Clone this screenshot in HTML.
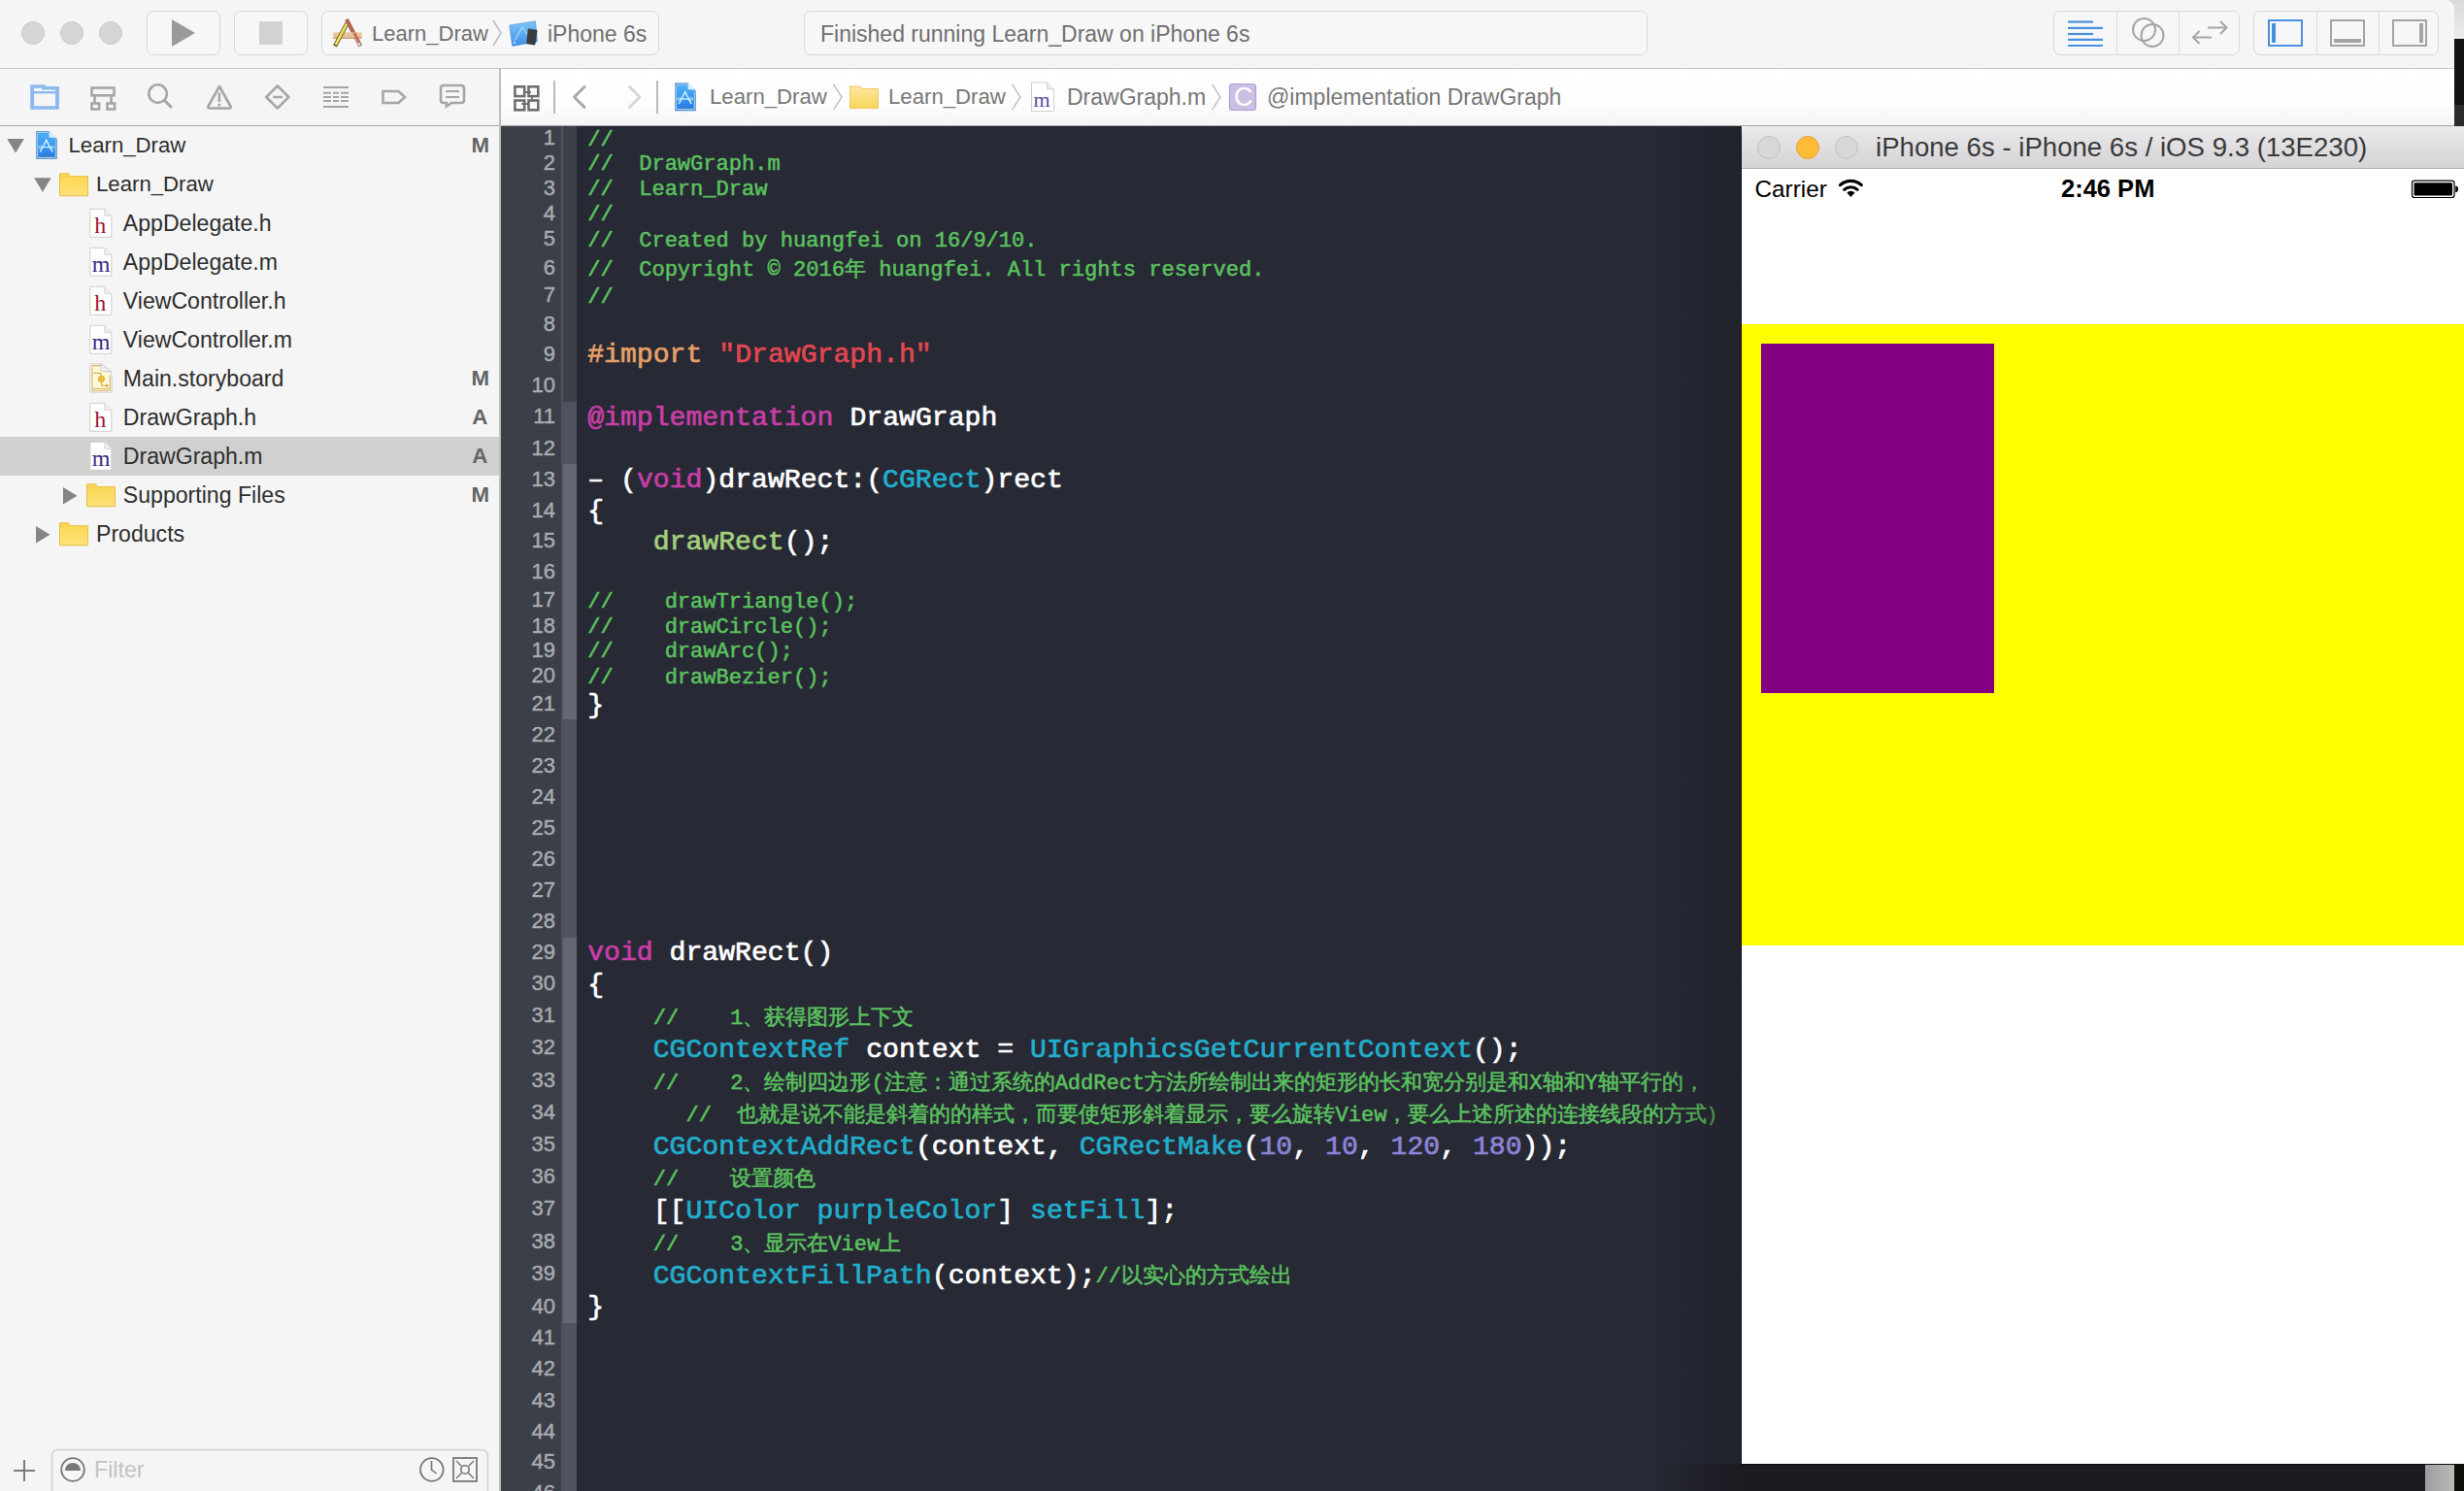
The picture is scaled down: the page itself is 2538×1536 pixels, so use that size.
<!DOCTYPE html>
<html><head><meta charset="utf-8"><style>
html,body{margin:0;padding:0;}
body{width:2538px;height:1536px;position:relative;overflow:hidden;background:#111;font-family:'Liberation Sans',sans-serif;}
.t{position:absolute;line-height:0;white-space:pre;}
svg{position:absolute;overflow:visible;}
.cj{display:inline-block;text-align:center;}
</style></head><body>

<div style="position:absolute;left:2500px;top:0px;width:38px;height:40px;background:linear-gradient(#d9d9d9,#ececec);"></div>
<div style="position:absolute;left:2528px;top:40px;width:10px;height:68px;background:#121212;"></div>
<div style="position:absolute;left:2528px;top:108px;width:10px;height:22px;background:#2b2b2b;"></div>
<div style="position:absolute;left:0;top:0;width:2528px;height:1536px;background:#f5f5f5;border-top-right-radius:9px;overflow:hidden">
<div style="position:absolute;left:0px;top:0px;width:2528px;height:70px;background:#f5f5f5;"></div>
<div style="position:absolute;left:0px;top:70px;width:2528px;height:1px;background:#c6c6c6;"></div>
<div style="position:absolute;left:0px;top:71px;width:514px;height:1465px;background:#f5f5f5;"></div>
<div style="position:absolute;left:516px;top:71px;width:2012px;height:58px;background:linear-gradient(#ffffff 0%,#fdfdfd 60%,#f5f5f5 100%);"></div>
<div style="position:absolute;left:0px;top:128.5px;width:2528px;height:1.5px;background:#a9a9a9;"></div>
<div style="position:absolute;left:514px;top:71px;width:2px;height:1465px;background:#bdbdbd;"></div>
</div>
<div style="position:absolute;left:22px;top:21.5px;width:22px;height:22px;border-radius:50%;background:#d6d6d6;border:1px solid #c9c9c9"></div>
<div style="position:absolute;left:62px;top:21.5px;width:22px;height:22px;border-radius:50%;background:#d6d6d6;border:1px solid #c9c9c9"></div>
<div style="position:absolute;left:101.5px;top:21.5px;width:22px;height:22px;border-radius:50%;background:#d6d6d6;border:1px solid #c9c9c9"></div>
<div style="position:absolute;left:151px;top:11px;width:76px;height:46px;border:1.5px solid #d9d9d9;border-radius:7px;background:#f7f7f7;box-sizing:border-box"></div>
<div style="position:absolute;left:241px;top:11px;width:76px;height:46px;border:1.5px solid #d9d9d9;border-radius:7px;background:#f7f7f7;box-sizing:border-box"></div>
<svg style="left:0;top:0" width="2538" height="70"><polygon points="177,20 177,48 201,34" fill="#9a9a9a"/><rect x="267" y="22" width="24" height="24" fill="#d2d2d2"/></svg>
<div style="position:absolute;left:331px;top:11px;width:348px;height:46px;border:1.5px solid #d9d9d9;border-radius:7px;background:#f7f7f7;box-sizing:border-box"></div>
<div style="position:absolute;left:828px;top:11px;width:869px;height:46px;border:1.5px solid #d9d9d9;border-radius:7px;background:#f7f7f7;box-sizing:border-box"></div>
<div class="t" style="left:383.0px;top:35.3px;font-family:'Liberation Sans', sans-serif;font-size:22px;color:#6f6f6f;font-weight:normal;">Learn_Draw</div>
<div class="t" style="left:564.0px;top:35.0px;font-family:'Liberation Sans', sans-serif;font-size:23px;color:#6f6f6f;font-weight:normal;">iPhone 6s</div>
<div class="t" style="left:845.0px;top:35.0px;font-family:'Liberation Sans', sans-serif;font-size:23px;color:#6f6f6f;font-weight:normal;">Finished running Learn_Draw on iPhone 6s</div>
<svg style="left:0;top:0" width="700" height="70"><polyline points="508,21 516,34 508,47" fill="none" stroke="#bdbdbd" stroke-width="1.6"/></svg>
<div style="position:absolute;left:2115px;top:11px;width:192px;height:46px;border:1.5px solid #d9d9d9;border-radius:7px;background:#f7f7f7;box-sizing:border-box"></div>
<div style="position:absolute;left:2180px;top:12px;width:1px;height:44px;background:#dcdcdc;"></div>
<div style="position:absolute;left:2244px;top:12px;width:1px;height:44px;background:#dcdcdc;"></div>
<div style="position:absolute;left:2321px;top:11px;width:191px;height:46px;border:1.5px solid #d9d9d9;border-radius:7px;background:#f7f7f7;box-sizing:border-box"></div>
<div style="position:absolute;left:2386px;top:12px;width:1px;height:44px;background:#dcdcdc;"></div>
<div style="position:absolute;left:2450px;top:12px;width:1px;height:44px;background:#dcdcdc;"></div>
<svg style="left:0;top:0" width="2538" height="70">
<g stroke="#4a90e2" stroke-width="2.2">
<line x1="2130" y1="22.5" x2="2156" y2="22.5"/><line x1="2130" y1="28.8" x2="2166" y2="28.8"/>
<line x1="2130" y1="35" x2="2156" y2="35"/><line x1="2130" y1="40.8" x2="2166" y2="40.8"/><line x1="2130" y1="47" x2="2166" y2="47"/>
</g>
<g fill="none" stroke="#a4a4a4" stroke-width="2">
<circle cx="2208.5" cy="30.5" r="11.5"/><circle cx="2217" cy="36.5" r="11.5"/>
<polyline points="2274,28.5 2293.5,28.5"/><polyline points="2287,22 2293.5,28.5 2287,35"/>
<polyline points="2259,38.5 2278,38.5"/><polyline points="2265.5,32 2259,38.5 2265.5,45"/>
</g>
<rect x="2337" y="21" width="34" height="26" fill="none" stroke="#4a90e2" stroke-width="2"/>
<rect x="2340" y="24" width="4" height="20" fill="#4a90e2"/>
<rect x="2401" y="21" width="34" height="26" fill="none" stroke="#a4a4a4" stroke-width="2"/>
<rect x="2404" y="40" width="28" height="4" fill="#a4a4a4"/>
<rect x="2465" y="21" width="34" height="26" fill="none" stroke="#a4a4a4" stroke-width="2"/>
<rect x="2492" y="24" width="4" height="20" fill="#a4a4a4"/>
</svg>
<svg style="left:0;top:71px" width="516" height="58" viewBox="0 71 516 58">
<path d="M31.2,112.8 V87.2 H46.8 V89 H60.9 V112.8 Z" fill="#8cbaf0"/>
<rect x="35.1" y="96.4" width="21.9" height="12.8" fill="#f5f5f5"/>
<path d="M35.1,90.8 H43 V92.4 H57 V94 H35.1 Z" fill="#f5f5f5"/>
<g fill="none" stroke="#a6a6a6" stroke-width="2.6">
<rect x="94.5" y="90.5" width="23" height="7.8"/>
<line x1="97.5" y1="98.4" x2="97.5" y2="106"/><line x1="114.5" y1="98.4" x2="114.5" y2="106"/>
<rect x="94.5" y="106.5" width="7.6" height="6"/><rect x="110.5" y="106.5" width="7.6" height="6"/>
<circle cx="162.6" cy="96.6" r="9.3"/>
<line x1="169.5" y1="103.5" x2="176" y2="110" stroke-linecap="round" stroke-width="3"/>
<path d="M226,89 L214.5,109.5 Q213.5,111.5 216,111.5 L236,111.5 Q238.5,111.5 237.5,109.5 Z" stroke-linejoin="round"/>
<line x1="225.9" y1="95.5" x2="225.9" y2="105" />
<path d="M285.8,88.5 L297.4,100 L285.8,111.5 L274.2,100 Z" stroke-linejoin="round"/>
<line x1="281.2" y1="100" x2="291" y2="100"/>
<line x1="333" y1="90" x2="359" y2="90" stroke-width="2"/>
<line x1="333" y1="110" x2="359" y2="110" stroke-width="2"/>
<g stroke-width="2" stroke-dasharray="8 2 6 2 8">
<line x1="333" y1="95.8" x2="359" y2="95.8"/><line x1="333" y1="99.9" x2="359" y2="99.9"/><line x1="333" y1="103.9" x2="359" y2="103.9"/>
</g>
<path d="M394.5,94 H410.5 L417,100 L410.5,106 H394.5 Z"/>
<path d="M457,88 H475 Q478,88 478,91 V103 Q478,106 475,106 H465 L459.8,109.5 V106 H457 Q454,106 454,103 V91 Q454,88 457,88 Z"/>
<line x1="459" y1="94" x2="473" y2="94" stroke-width="2"/><line x1="459" y1="100" x2="473" y2="100" stroke-width="2"/>
</g>
<rect x="224.5" y="106.8" width="2.8" height="2.6" fill="#a6a6a6"/>
</svg>
<svg style="left:516px;top:71px" width="2012" height="58" viewBox="516 71 2012 58">
<g fill="none" stroke="#6e6e6e" stroke-width="2.6">
<rect x="530.4" y="89.3" width="9.8" height="9.8"/><rect x="544.5" y="89.3" width="9.8" height="9.8"/>
<rect x="530.4" y="103.5" width="9.8" height="9.8"/><rect x="544.5" y="103.5" width="9.8" height="9.8"/>
<line x1="540" y1="95" x2="547" y2="95" stroke-width="1.8"/><line x1="548" y1="99" x2="548" y2="105" stroke-width="1.8"/>
<line x1="537" y1="107" x2="544" y2="107" stroke-width="1.8"/>
</g>
<line x1="571" y1="83" x2="571" y2="117" stroke="#b3b3b3" stroke-width="1.8"/>
<line x1="677" y1="83" x2="677" y2="117" stroke="#b3b3b3" stroke-width="1.8"/>
<polyline points="602,89.5 591.5,100 602,110.5" fill="none" stroke="#a8a8a8" stroke-width="3" stroke-linecap="round" stroke-linejoin="round"/>
<polyline points="648.5,89.5 659,100 648.5,110.5" fill="none" stroke="#d6d6d6" stroke-width="3" stroke-linecap="round" stroke-linejoin="round"/>
<g fill="none" stroke="#c2c2c2" stroke-width="1.5">
<polyline points="858.5,87 867,100 858.5,113"/><polyline points="1042.5,87 1051,100 1042.5,113"/><polyline points="1248.5,87 1257,100 1248.5,113"/>
</g>
</svg>
<svg style="left:330px;top:8px" width="240" height="52" viewBox="330 8 240 52">
<line x1="357" y1="20" x2="371.2" y2="47.5" stroke="#8a6a6a" stroke-width="4"/>
<line x1="357" y1="20" x2="366" y2="38" stroke="#c5624f" stroke-width="3"/>
<line x1="366.5" y1="39" x2="370.6" y2="47" stroke="#e6dede" stroke-width="2.4"/>
<rect x="343.2" y="33.4" width="29.5" height="6" fill="#e8c69c"/>
<line x1="343.2" y1="39.2" x2="372.7" y2="39.2" stroke="#b98a5a" stroke-width="1"/>
<line x1="365" y1="34" x2="370" y2="44" stroke="#c5624f" stroke-width="3" opacity="0.85"/>
<line x1="357.5" y1="24" x2="345" y2="47.5" stroke="#6f6224" stroke-width="4.4"/>
<line x1="357.2" y1="24.5" x2="345.8" y2="46" stroke="#f1e45c" stroke-width="2.6"/>
<defs><linearGradient id="gbp" x1="0" y1="0" x2="0" y2="1"><stop offset="0" stop-color="#7cc4f8"/><stop offset="1" stop-color="#3f8fe8"/></linearGradient></defs>
<path d="M524.7,26 L551.5,21.7 L553.5,43 L527.7,47.5 Z" fill="url(#gbp)" stroke="#4a90d8" stroke-width="0.6"/>
<path d="M530,42 L538,28 L545,38" fill="none" stroke="#d2ebff" stroke-width="0.9"/>
<circle cx="530" cy="44" r="1" fill="#e8f4ff"/>
<path d="M544.4,29.4 L552.6,30.8 Q553.6,31 553.4,32 L551.4,45.6 Q551.2,46.6 550.2,46.4 L543,45.2 Q542,45 542.2,44 L543.8,30.2 Q544,29.3 544.4,29.4 Z" fill="#3c3c3c"/>
</svg>
<svg style="left:690px;top:80px" width="620" height="40" viewBox="690 80 620 40">
<defs>
<linearGradient id="gblue3" x1="0" y1="0" x2="0" y2="1"><stop offset="0" stop-color="#4eb0f5"/><stop offset="1" stop-color="#2a80ea"/></linearGradient>
<linearGradient id="gyel" x1="0" y1="0" x2="0" y2="1"><stop offset="0" stop-color="#fde8a0"/><stop offset="1" stop-color="#f9d45a"/></linearGradient>
</defs>
<g transform="translate(658,-49.6)"><path d="M37.3,135.2 H50.6 L58.7,143.3 V163.8 H37.3 Z" fill="#3b7cc6"/>
<path d="M38.8,136.7 H50 L57.2,143.9 V162.3 H38.8 Z" fill="none" stroke="#b4ecff" stroke-width="1"/>
<path d="M39.6,137.5 H49.6 L56.4,144.3 V159.8 H39.6 Z" fill="url(#gblue2)"/>
<line x1="39.3" y1="161" x2="56.7" y2="161" stroke="#3b7cc6" stroke-width="1.1"/>
<path d="M50.6,135.4 V141.8 H58.5 Z" fill="#d6f3ff"/>
<path d="M41.3,156.6 L47.7,144.3 L54.1,156.6" stroke="#c8f2ff" stroke-width="1.5" fill="none"/>
<line x1="42.5" y1="151.6" x2="53" y2="151.6" stroke="#c8f2ff" stroke-width="1.3"/>
<circle cx="41.5" cy="151.6" r="1.4" fill="none" stroke="#c8f2ff" stroke-width="0.9"/>
<circle cx="54.3" cy="151.6" r="1.4" fill="none" stroke="#c8f2ff" stroke-width="0.9"/></g>
<path d="M875.5,111.5 V89 H886 L888,91.5 H904.5 V111.5 Z" fill="url(#gyel)" stroke="#e8c04a" stroke-width="0.8"/>
<path d="M1062.5,85 H1078.5 L1085.5,92 V114.5 H1062.5 Z" fill="#ffffff" stroke="#cfcfcf" stroke-width="1"/>
<path d="M1078.5,85 V92 H1085.5" fill="#ececec" stroke="#cfcfcf" stroke-width="1"/>
<rect x="1266.5" y="86.5" width="27" height="27" rx="3" fill="#cbc0e3" stroke="#ad9fd6" stroke-width="1.2"/>
</svg>
<div class="t" style="left:1064.5px;top:103.3px;font-family:'Liberation Serif', serif;font-size:22px;color:#5b4ca6;font-weight:normal;">m</div>
<div class="t" style="left:1271.0px;top:100.0px;font-family:'Liberation Sans', sans-serif;font-size:27px;color:#ffffff;font-weight:normal;">C</div>
<div class="t" style="left:731.0px;top:100.2px;font-family:'Liberation Sans', sans-serif;font-size:22.2px;color:#777777;font-weight:normal;">Learn_Draw</div>
<div class="t" style="left:915.0px;top:100.2px;font-family:'Liberation Sans', sans-serif;font-size:22.2px;color:#777777;font-weight:normal;">Learn_Draw</div>
<div class="t" style="left:1099.0px;top:100.0px;font-family:'Liberation Sans', sans-serif;font-size:23px;color:#777777;font-weight:normal;">DrawGraph.m</div>
<div class="t" style="left:1305.0px;top:100.0px;font-family:'Liberation Sans', sans-serif;font-size:23px;color:#777777;font-weight:normal;">@implementation DrawGraph</div>
<div style="position:absolute;left:0px;top:450px;width:514px;height:40px;background:#d0d0d0;"></div>
<svg style="left:0;top:0" width="1" height="1"><defs><linearGradient id="gyel2" x1="0" y1="0" x2="0" y2="1"><stop offset="0" stop-color="#fcd64f"/><stop offset="1" stop-color="#fde27a"/></linearGradient>
<linearGradient id="gblue2" x1="0" y1="0" x2="0" y2="1"><stop offset="0" stop-color="#4eb0f5"/><stop offset="1" stop-color="#2a80ea"/></linearGradient></defs></svg>
<svg style="left:0;top:0" width="1" height="1"><polygon points="7.3,143 24.8,143 16.05,157.5" fill="#858585"/></svg>
<svg style="left:0;top:0" width="1" height="1"><path d="M37.3,135.2 H50.6 L58.7,143.3 V163.8 H37.3 Z" fill="#3b7cc6"/>
<path d="M38.8,136.7 H50 L57.2,143.9 V162.3 H38.8 Z" fill="none" stroke="#b4ecff" stroke-width="1"/>
<path d="M39.6,137.5 H49.6 L56.4,144.3 V159.8 H39.6 Z" fill="url(#gblue2)"/>
<line x1="39.3" y1="161" x2="56.7" y2="161" stroke="#3b7cc6" stroke-width="1.1"/>
<path d="M50.6,135.4 V141.8 H58.5 Z" fill="#d6f3ff"/>
<path d="M41.3,156.6 L47.7,144.3 L54.1,156.6" stroke="#c8f2ff" stroke-width="1.5" fill="none"/>
<line x1="42.5" y1="151.6" x2="53" y2="151.6" stroke="#c8f2ff" stroke-width="1.3"/>
<circle cx="41.5" cy="151.6" r="1.4" fill="none" stroke="#c8f2ff" stroke-width="0.9"/>
<circle cx="54.3" cy="151.6" r="1.4" fill="none" stroke="#c8f2ff" stroke-width="0.9"/></svg>
<div class="t" style="left:70.5px;top:149.8px;font-family:'Liberation Sans', sans-serif;font-size:22.2px;color:#2e2e2e;font-weight:normal;">Learn_Draw</div>
<div class="t" style="left:485.5px;top:150.2px;font-family:'Liberation Sans', sans-serif;font-size:22.3px;color:#646464;font-weight:bold;">M</div>
<svg style="left:0;top:0" width="1" height="1"><polygon points="35.2,183.3 52.7,183.3 43.95,197.8" fill="#858585"/></svg>
<svg style="left:0;top:0" width="1" height="1"><path d="M61.5,201.8 V178.8 H70.5 L72.5,181.5 H90.5 V201.8 Z" fill="url(#gyel2)" stroke="#e3b93c" stroke-width="0.9"/><line x1="62" y1="181.9" x2="90" y2="181.9" stroke="#f0cc55" stroke-width="0.8"/></svg>
<div class="t" style="left:99.0px;top:189.8px;font-family:'Liberation Sans', sans-serif;font-size:22.2px;color:#2e2e2e;font-weight:normal;">Learn_Draw</div>
<svg style="left:0;top:0" width="1" height="1"><path d="M92.8,215.3 H107.8 L114.8,222.3 V244.3 H92.8 Z" fill="#ffffff" stroke="#cdcdcd" stroke-width="1"/><path d="M107.8,215.3 V222.3 H114.8" fill="#efefef" stroke="#d5d5d5" stroke-width="1"/></svg>
<div class="t" style="left:97.3px;top:231.9px;font-family:'Liberation Serif', serif;font-size:24px;color:#a0142c;font-weight:normal;">h</div>
<div class="t" style="left:126.8px;top:229.5px;font-family:'Liberation Sans', sans-serif;font-size:23.1px;color:#2e2e2e;font-weight:normal;">AppDelegate.h</div>
<svg style="left:0;top:0" width="1" height="1"><path d="M92.8,255.3 H107.8 L114.8,262.3 V284.3 H92.8 Z" fill="#ffffff" stroke="#cdcdcd" stroke-width="1"/><path d="M107.8,255.3 V262.3 H114.8" fill="#efefef" stroke="#d5d5d5" stroke-width="1"/></svg>
<div class="t" style="left:94.8px;top:271.9px;font-family:'Liberation Serif', serif;font-size:24px;color:#3b2a84;font-weight:normal;">m</div>
<div class="t" style="left:126.8px;top:269.5px;font-family:'Liberation Sans', sans-serif;font-size:23.1px;color:#2e2e2e;font-weight:normal;">AppDelegate.m</div>
<svg style="left:0;top:0" width="1" height="1"><path d="M92.8,295.3 H107.8 L114.8,302.3 V324.3 H92.8 Z" fill="#ffffff" stroke="#cdcdcd" stroke-width="1"/><path d="M107.8,295.3 V302.3 H114.8" fill="#efefef" stroke="#d5d5d5" stroke-width="1"/></svg>
<div class="t" style="left:97.3px;top:311.9px;font-family:'Liberation Serif', serif;font-size:24px;color:#a0142c;font-weight:normal;">h</div>
<div class="t" style="left:126.8px;top:309.5px;font-family:'Liberation Sans', sans-serif;font-size:23.1px;color:#2e2e2e;font-weight:normal;">ViewController.h</div>
<svg style="left:0;top:0" width="1" height="1"><path d="M92.8,335.3 H107.8 L114.8,342.3 V364.3 H92.8 Z" fill="#ffffff" stroke="#cdcdcd" stroke-width="1"/><path d="M107.8,335.3 V342.3 H114.8" fill="#efefef" stroke="#d5d5d5" stroke-width="1"/></svg>
<div class="t" style="left:94.8px;top:351.9px;font-family:'Liberation Serif', serif;font-size:24px;color:#3b2a84;font-weight:normal;">m</div>
<div class="t" style="left:126.8px;top:349.5px;font-family:'Liberation Sans', sans-serif;font-size:23.1px;color:#2e2e2e;font-weight:normal;">ViewController.m</div>
<svg style="left:0;top:0" width="1" height="1"><path d="M92.8,374.8 H104 L115,385.5 V404 H92.8 Z" fill="#ffffff" stroke="#cacaca" stroke-width="1"/><path d="M104,374.8 V381.5 Q104,382.8 105.3,382.8 H115" fill="#eeeeee" stroke="#cacaca" stroke-width="1"/><path d="M94.9,376.6 H103.2 L113.3,386.5 V402.3 H94.9 Z" fill="#fffad6"/><path d="M103.2,376.6 H94.9 V402.3 H113.3 V386.5" fill="none" stroke="#d8b56c" stroke-width="1.1"/><path d="M104,374.8 V381.5 Q104,382.8 105.3,382.8 H115 Z" fill="#eeeeee" stroke="#cacaca" stroke-width="1"/><line x1="95" y1="400.3" x2="113" y2="400.3" stroke="#d8b56c" stroke-width="1"/><path d="M96.2,384.4 H101.6 Q104.4,384.4 104.4,387.2" fill="none" stroke="#d9aa44" stroke-width="1.1"/><circle cx="104.4" cy="390.4" r="3.2" fill="#f2be3c" stroke="#e0a635" stroke-width="0.8"/><path d="M104.4,393.6 V395.3 Q104.4,397.3 106.6,397.3 H110.5" fill="none" stroke="#d9aa44" stroke-width="1.1"/><polygon points="109.2,395.2 112.2,397.3 109.2,399.4" fill="#d9aa44"/></svg>
<div class="t" style="left:126.8px;top:389.5px;font-family:'Liberation Sans', sans-serif;font-size:23.1px;color:#2e2e2e;font-weight:normal;">Main.storyboard</div>
<div class="t" style="left:485.5px;top:390.2px;font-family:'Liberation Sans', sans-serif;font-size:22.3px;color:#646464;font-weight:bold;">M</div>
<svg style="left:0;top:0" width="1" height="1"><path d="M92.8,415.3 H107.8 L114.8,422.3 V444.3 H92.8 Z" fill="#ffffff" stroke="#cdcdcd" stroke-width="1"/><path d="M107.8,415.3 V422.3 H114.8" fill="#efefef" stroke="#d5d5d5" stroke-width="1"/></svg>
<div class="t" style="left:97.3px;top:431.9px;font-family:'Liberation Serif', serif;font-size:24px;color:#a0142c;font-weight:normal;">h</div>
<div class="t" style="left:126.8px;top:429.5px;font-family:'Liberation Sans', sans-serif;font-size:23.1px;color:#2e2e2e;font-weight:normal;">DrawGraph.h</div>
<div class="t" style="left:486.3px;top:430.2px;font-family:'Liberation Sans', sans-serif;font-size:22.3px;color:#646464;font-weight:bold;">A</div>
<svg style="left:0;top:0" width="1" height="1"><path d="M92.8,455.3 H107.8 L114.8,462.3 V484.3 H92.8 Z" fill="#ffffff" stroke="#cdcdcd" stroke-width="1"/><path d="M107.8,455.3 V462.3 H114.8" fill="#efefef" stroke="#d5d5d5" stroke-width="1"/></svg>
<div class="t" style="left:94.8px;top:471.9px;font-family:'Liberation Serif', serif;font-size:24px;color:#3b2a84;font-weight:normal;">m</div>
<div class="t" style="left:126.8px;top:469.5px;font-family:'Liberation Sans', sans-serif;font-size:23.1px;color:#2e2e2e;font-weight:normal;">DrawGraph.m</div>
<div class="t" style="left:486.3px;top:470.2px;font-family:'Liberation Sans', sans-serif;font-size:22.3px;color:#646464;font-weight:bold;">A</div>
<svg style="left:0;top:0" width="1" height="1"><polygon points="65,502 65,519.5 79.5,510.75" fill="#858585"/></svg>
<svg style="left:0;top:0" width="1" height="1"><path d="M89.5,521.8 V498.8 H98.5 L100.5,501.5 H118.5 V521.8 Z" fill="url(#gyel2)" stroke="#e3b93c" stroke-width="0.9"/><line x1="90" y1="501.90000000000003" x2="118" y2="501.90000000000003" stroke="#f0cc55" stroke-width="0.8"/></svg>
<div class="t" style="left:126.8px;top:509.5px;font-family:'Liberation Sans', sans-serif;font-size:23.1px;color:#2e2e2e;font-weight:normal;">Supporting Files</div>
<div class="t" style="left:485.5px;top:510.2px;font-family:'Liberation Sans', sans-serif;font-size:22.3px;color:#646464;font-weight:bold;">M</div>
<svg style="left:0;top:0" width="1" height="1"><polygon points="37,542 37,559.5 51.5,550.75" fill="#858585"/></svg>
<svg style="left:0;top:0" width="1" height="1"><path d="M61.5,561.8 V538.8 H70.5 L72.5,541.5 H90.5 V561.8 Z" fill="url(#gyel2)" stroke="#e3b93c" stroke-width="0.9"/><line x1="62" y1="541.9" x2="90" y2="541.9" stroke="#f0cc55" stroke-width="0.8"/></svg>
<div class="t" style="left:99.0px;top:549.5px;font-family:'Liberation Sans', sans-serif;font-size:23.1px;color:#2e2e2e;font-weight:normal;">Products</div>
<svg style="left:0;top:1480px" width="516" height="56" viewBox="0 1480 516 56">
<g stroke="#6f6f6f" stroke-width="1.8"><line x1="14" y1="1515" x2="36" y2="1515"/><line x1="25" y1="1504" x2="25" y2="1526"/></g>
<rect x="53.5" y="1493.5" width="449" height="50" rx="6" fill="#f5f5f5" stroke="#d2d2d2" stroke-width="1.5"/>
<circle cx="75" cy="1514" r="11.8" fill="none" stroke="#777" stroke-width="1.8"/>
<path d="M67,1515 A8,8 0 0 1 83,1515 Z" fill="#777"/>
<circle cx="444.8" cy="1514" r="11.8" fill="none" stroke="#777" stroke-width="1.8"/>
<polyline points="444.5,1505 444.5,1514 449.5,1518" fill="none" stroke="#777" stroke-width="1.6"/>
<rect x="467" y="1502" width="24" height="24" fill="none" stroke="#777" stroke-width="1.8"/>
<circle cx="479" cy="1514" r="4.2" fill="none" stroke="#777" stroke-width="1.6"/>
<g stroke="#777" stroke-width="1.4"><line x1="470" y1="1505" x2="475.5" y2="1510.5"/><line x1="488" y1="1505" x2="482.5" y2="1510.5"/><line x1="470" y1="1523" x2="475.5" y2="1517.5"/><line x1="488" y1="1523" x2="482.5" y2="1517.5"/></g>
</svg>
<div class="t" style="left:97.0px;top:1514.4px;font-family:'Liberation Sans', sans-serif;font-size:23.2px;color:#c3c3c3;font-weight:normal;">Filter</div>
<div style="position:absolute;left:516px;top:130px;width:62px;height:1406px;background:#3c3f48;"></div>
<div style="position:absolute;left:578px;top:130px;width:16px;height:1406px;background:#50535f;"></div>
<div style="position:absolute;left:578px;top:130px;width:16px;height:284px;background:#3d4049;"></div>
<div style="position:absolute;left:578px;top:130px;width:2px;height:284px;background:#50535d;"></div>
<div style="position:absolute;left:594px;top:130px;width:1200px;height:1406px;background:#272935;"></div>
<div style="position:absolute;left:580px;top:478px;width:14px;height:263px;background:#646875;"></div>
<div style="position:absolute;left:580px;top:965.5px;width:14px;height:397px;background:#646875;"></div>
<div class="t" style="left:522px;width:50px;text-align:right;top:142.3px;font-size:22px;color:#a9abb0;font-family:'Liberation Sans', sans-serif;-webkit-text-stroke:0.45px #a9abb0">1</div>
<div class="t" style="left:522px;width:50px;text-align:right;top:167.6px;font-size:22px;color:#a9abb0;font-family:'Liberation Sans', sans-serif;-webkit-text-stroke:0.45px #a9abb0">2</div>
<div class="t" style="left:522px;width:50px;text-align:right;top:193.8px;font-size:22px;color:#a9abb0;font-family:'Liberation Sans', sans-serif;-webkit-text-stroke:0.45px #a9abb0">3</div>
<div class="t" style="left:522px;width:50px;text-align:right;top:219.9px;font-size:22px;color:#a9abb0;font-family:'Liberation Sans', sans-serif;-webkit-text-stroke:0.45px #a9abb0">4</div>
<div class="t" style="left:522px;width:50px;text-align:right;top:246.1px;font-size:22px;color:#a9abb0;font-family:'Liberation Sans', sans-serif;-webkit-text-stroke:0.45px #a9abb0">5</div>
<div class="t" style="left:522px;width:50px;text-align:right;top:276.3px;font-size:22px;color:#a9abb0;font-family:'Liberation Sans', sans-serif;-webkit-text-stroke:0.45px #a9abb0">6</div>
<div class="t" style="left:522px;width:50px;text-align:right;top:304.0px;font-size:22px;color:#a9abb0;font-family:'Liberation Sans', sans-serif;-webkit-text-stroke:0.45px #a9abb0">7</div>
<div class="t" style="left:522px;width:50px;text-align:right;top:333.6px;font-size:22px;color:#a9abb0;font-family:'Liberation Sans', sans-serif;-webkit-text-stroke:0.45px #a9abb0">8</div>
<div class="t" style="left:522px;width:50px;text-align:right;top:364.8px;font-size:22px;color:#a9abb0;font-family:'Liberation Sans', sans-serif;-webkit-text-stroke:0.45px #a9abb0">9</div>
<div class="t" style="left:522px;width:50px;text-align:right;top:397.0px;font-size:22px;color:#a9abb0;font-family:'Liberation Sans', sans-serif;-webkit-text-stroke:0.45px #a9abb0">10</div>
<div class="t" style="left:522px;width:50px;text-align:right;top:429.3px;font-size:22px;color:#a9abb0;font-family:'Liberation Sans', sans-serif;-webkit-text-stroke:0.45px #a9abb0">11</div>
<div class="t" style="left:522px;width:50px;text-align:right;top:461.6px;font-size:22px;color:#a9abb0;font-family:'Liberation Sans', sans-serif;-webkit-text-stroke:0.45px #a9abb0">12</div>
<div class="t" style="left:522px;width:50px;text-align:right;top:493.8px;font-size:22px;color:#a9abb0;font-family:'Liberation Sans', sans-serif;-webkit-text-stroke:0.45px #a9abb0">13</div>
<div class="t" style="left:522px;width:50px;text-align:right;top:526.0px;font-size:22px;color:#a9abb0;font-family:'Liberation Sans', sans-serif;-webkit-text-stroke:0.45px #a9abb0">14</div>
<div class="t" style="left:522px;width:50px;text-align:right;top:557.2px;font-size:22px;color:#a9abb0;font-family:'Liberation Sans', sans-serif;-webkit-text-stroke:0.45px #a9abb0">15</div>
<div class="t" style="left:522px;width:50px;text-align:right;top:589.3px;font-size:22px;color:#a9abb0;font-family:'Liberation Sans', sans-serif;-webkit-text-stroke:0.45px #a9abb0">16</div>
<div class="t" style="left:522px;width:50px;text-align:right;top:618.3px;font-size:22px;color:#a9abb0;font-family:'Liberation Sans', sans-serif;-webkit-text-stroke:0.45px #a9abb0">17</div>
<div class="t" style="left:522px;width:50px;text-align:right;top:644.7px;font-size:22px;color:#a9abb0;font-family:'Liberation Sans', sans-serif;-webkit-text-stroke:0.45px #a9abb0">18</div>
<div class="t" style="left:522px;width:50px;text-align:right;top:669.8px;font-size:22px;color:#a9abb0;font-family:'Liberation Sans', sans-serif;-webkit-text-stroke:0.45px #a9abb0">19</div>
<div class="t" style="left:522px;width:50px;text-align:right;top:696.0px;font-size:22px;color:#a9abb0;font-family:'Liberation Sans', sans-serif;-webkit-text-stroke:0.45px #a9abb0">20</div>
<div class="t" style="left:522px;width:50px;text-align:right;top:725.3px;font-size:22px;color:#a9abb0;font-family:'Liberation Sans', sans-serif;-webkit-text-stroke:0.45px #a9abb0">21</div>
<div class="t" style="left:522px;width:50px;text-align:right;top:757.2px;font-size:22px;color:#a9abb0;font-family:'Liberation Sans', sans-serif;-webkit-text-stroke:0.45px #a9abb0">22</div>
<div class="t" style="left:522px;width:50px;text-align:right;top:789.3px;font-size:22px;color:#a9abb0;font-family:'Liberation Sans', sans-serif;-webkit-text-stroke:0.45px #a9abb0">23</div>
<div class="t" style="left:522px;width:50px;text-align:right;top:821.0px;font-size:22px;color:#a9abb0;font-family:'Liberation Sans', sans-serif;-webkit-text-stroke:0.45px #a9abb0">24</div>
<div class="t" style="left:522px;width:50px;text-align:right;top:853.2px;font-size:22px;color:#a9abb0;font-family:'Liberation Sans', sans-serif;-webkit-text-stroke:0.45px #a9abb0">25</div>
<div class="t" style="left:522px;width:50px;text-align:right;top:885.3px;font-size:22px;color:#a9abb0;font-family:'Liberation Sans', sans-serif;-webkit-text-stroke:0.45px #a9abb0">26</div>
<div class="t" style="left:522px;width:50px;text-align:right;top:916.6px;font-size:22px;color:#a9abb0;font-family:'Liberation Sans', sans-serif;-webkit-text-stroke:0.45px #a9abb0">27</div>
<div class="t" style="left:522px;width:50px;text-align:right;top:948.8px;font-size:22px;color:#a9abb0;font-family:'Liberation Sans', sans-serif;-webkit-text-stroke:0.45px #a9abb0">28</div>
<div class="t" style="left:522px;width:50px;text-align:right;top:980.9px;font-size:22px;color:#a9abb0;font-family:'Liberation Sans', sans-serif;-webkit-text-stroke:0.45px #a9abb0">29</div>
<div class="t" style="left:522px;width:50px;text-align:right;top:1013.3px;font-size:22px;color:#a9abb0;font-family:'Liberation Sans', sans-serif;-webkit-text-stroke:0.45px #a9abb0">30</div>
<div class="t" style="left:522px;width:50px;text-align:right;top:1046.2px;font-size:22px;color:#a9abb0;font-family:'Liberation Sans', sans-serif;-webkit-text-stroke:0.45px #a9abb0">31</div>
<div class="t" style="left:522px;width:50px;text-align:right;top:1079.3px;font-size:22px;color:#a9abb0;font-family:'Liberation Sans', sans-serif;-webkit-text-stroke:0.45px #a9abb0">32</div>
<div class="t" style="left:522px;width:50px;text-align:right;top:1112.6px;font-size:22px;color:#a9abb0;font-family:'Liberation Sans', sans-serif;-webkit-text-stroke:0.45px #a9abb0">33</div>
<div class="t" style="left:522px;width:50px;text-align:right;top:1145.8px;font-size:22px;color:#a9abb0;font-family:'Liberation Sans', sans-serif;-webkit-text-stroke:0.45px #a9abb0">34</div>
<div class="t" style="left:522px;width:50px;text-align:right;top:1179.3px;font-size:22px;color:#a9abb0;font-family:'Liberation Sans', sans-serif;-webkit-text-stroke:0.45px #a9abb0">35</div>
<div class="t" style="left:522px;width:50px;text-align:right;top:1212.2px;font-size:22px;color:#a9abb0;font-family:'Liberation Sans', sans-serif;-webkit-text-stroke:0.45px #a9abb0">36</div>
<div class="t" style="left:522px;width:50px;text-align:right;top:1245.3px;font-size:22px;color:#a9abb0;font-family:'Liberation Sans', sans-serif;-webkit-text-stroke:0.45px #a9abb0">37</div>
<div class="t" style="left:522px;width:50px;text-align:right;top:1278.6px;font-size:22px;color:#a9abb0;font-family:'Liberation Sans', sans-serif;-webkit-text-stroke:0.45px #a9abb0">38</div>
<div class="t" style="left:522px;width:50px;text-align:right;top:1312.4px;font-size:22px;color:#a9abb0;font-family:'Liberation Sans', sans-serif;-webkit-text-stroke:0.45px #a9abb0">39</div>
<div class="t" style="left:522px;width:50px;text-align:right;top:1345.6px;font-size:22px;color:#a9abb0;font-family:'Liberation Sans', sans-serif;-webkit-text-stroke:0.45px #a9abb0">40</div>
<div class="t" style="left:522px;width:50px;text-align:right;top:1378.2px;font-size:22px;color:#a9abb0;font-family:'Liberation Sans', sans-serif;-webkit-text-stroke:0.45px #a9abb0">41</div>
<div class="t" style="left:522px;width:50px;text-align:right;top:1410.3px;font-size:22px;color:#a9abb0;font-family:'Liberation Sans', sans-serif;-webkit-text-stroke:0.45px #a9abb0">42</div>
<div class="t" style="left:522px;width:50px;text-align:right;top:1442.6px;font-size:22px;color:#a9abb0;font-family:'Liberation Sans', sans-serif;-webkit-text-stroke:0.45px #a9abb0">43</div>
<div class="t" style="left:522px;width:50px;text-align:right;top:1474.8px;font-size:22px;color:#a9abb0;font-family:'Liberation Sans', sans-serif;-webkit-text-stroke:0.45px #a9abb0">44</div>
<div class="t" style="left:522px;width:50px;text-align:right;top:1506.0px;font-size:22px;color:#a9abb0;font-family:'Liberation Sans', sans-serif;-webkit-text-stroke:0.45px #a9abb0">45</div>
<div class="t" style="left:522px;width:50px;text-align:right;top:1538.0px;font-size:22px;color:#a9abb0;font-family:'Liberation Sans', sans-serif;-webkit-text-stroke:0.45px #a9abb0">46</div>
<div class="t" style="left:605.2px;top:144.8px;font-family:'Liberation Mono', monospace;font-size:22.07px;color:#5bc15e;-webkit-text-stroke:0.55px #5bc15e">//</div>
<div class="t" style="left:605.2px;top:170.1px;font-family:'Liberation Mono', monospace;font-size:22.07px;color:#5bc15e;-webkit-text-stroke:0.55px #5bc15e">//  DrawGraph.m</div>
<div class="t" style="left:605.2px;top:196.3px;font-family:'Liberation Mono', monospace;font-size:22.07px;color:#5bc15e;-webkit-text-stroke:0.55px #5bc15e">//  Learn_Draw</div>
<div class="t" style="left:605.2px;top:222.4px;font-family:'Liberation Mono', monospace;font-size:22.07px;color:#5bc15e;-webkit-text-stroke:0.55px #5bc15e">//</div>
<div class="t" style="left:605.2px;top:248.6px;font-family:'Liberation Mono', monospace;font-size:22.07px;color:#5bc15e;-webkit-text-stroke:0.55px #5bc15e">//  Created by huangfei on 16/9/10.</div>
<div class="t" style="left:605.2px;top:278.8px;font-family:'Liberation Mono', monospace;font-size:22.07px;color:#5bc15e;-webkit-text-stroke:0.55px #5bc15e">//  Copyright © 2016</div>
<div class="t" style="left:870.0px;top:278.8px;font-family:'Liberation Mono', monospace;font-size:22.07px;color:#5bc15e;-webkit-text-stroke:0.55px #5bc15e"><span class="cj" style="width:22px">年</span></div>
<div class="t" style="left:892.0px;top:278.8px;font-family:'Liberation Mono', monospace;font-size:22.07px;color:#5bc15e;-webkit-text-stroke:0.55px #5bc15e"> huangfei. All rights reserved.</div>
<div class="t" style="left:605.2px;top:306.5px;font-family:'Liberation Mono', monospace;font-size:22.07px;color:#5bc15e;-webkit-text-stroke:0.55px #5bc15e">//</div>
<div class="t" style="left:605.2px;top:366.2px;font-family:'Liberation Mono', monospace;font-size:28.14px;color:#e4a066;-webkit-text-stroke:0.7px #e4a066">#import</div>
<div class="t" style="left:740.3px;top:366.2px;font-family:'Liberation Mono', monospace;font-size:28.14px;color:#e2474f;-webkit-text-stroke:0.7px #e2474f">"DrawGraph.h"</div>
<div class="t" style="left:605.2px;top:430.7px;font-family:'Liberation Mono', monospace;font-size:28.14px;color:#c83ea6;-webkit-text-stroke:0.7px #c83ea6">@implementation</div>
<div class="t" style="left:858.5px;top:430.7px;font-family:'Liberation Mono', monospace;font-size:28.14px;color:#ffffff;-webkit-text-stroke:0.7px #ffffff"> DrawGraph</div>
<div class="t" style="left:605.2px;top:495.2px;font-family:'Liberation Mono', monospace;font-size:28.14px;color:#ffffff;-webkit-text-stroke:0.7px #ffffff">– (</div>
<div class="t" style="left:655.9px;top:495.2px;font-family:'Liberation Mono', monospace;font-size:28.14px;color:#c83ea6;-webkit-text-stroke:0.7px #c83ea6">void</div>
<div class="t" style="left:723.4px;top:495.2px;font-family:'Liberation Mono', monospace;font-size:28.14px;color:#ffffff;-webkit-text-stroke:0.7px #ffffff">)drawRect:(</div>
<div class="t" style="left:909.1px;top:495.2px;font-family:'Liberation Mono', monospace;font-size:28.14px;color:#22aecb;-webkit-text-stroke:0.7px #22aecb">CGRect</div>
<div class="t" style="left:1010.4px;top:495.2px;font-family:'Liberation Mono', monospace;font-size:28.14px;color:#ffffff;-webkit-text-stroke:0.7px #ffffff">)rect</div>
<div class="t" style="left:605.2px;top:527.4px;font-family:'Liberation Mono', monospace;font-size:28.14px;color:#ffffff;-webkit-text-stroke:0.7px #ffffff">{</div>
<div class="t" style="left:672.7px;top:558.6px;font-family:'Liberation Mono', monospace;font-size:28.14px;color:#a3cf7c;-webkit-text-stroke:0.7px #a3cf7c">drawRect</div>
<div class="t" style="left:807.8px;top:558.6px;font-family:'Liberation Mono', monospace;font-size:28.14px;color:#ffffff;-webkit-text-stroke:0.7px #ffffff">();</div>
<div class="t" style="left:605.2px;top:620.8px;font-family:'Liberation Mono', monospace;font-size:22.07px;color:#5bc15e;-webkit-text-stroke:0.55px #5bc15e">//    drawTriangle();</div>
<div class="t" style="left:605.2px;top:647.2px;font-family:'Liberation Mono', monospace;font-size:22.07px;color:#5bc15e;-webkit-text-stroke:0.55px #5bc15e">//    drawCircle();</div>
<div class="t" style="left:605.2px;top:672.3px;font-family:'Liberation Mono', monospace;font-size:22.07px;color:#5bc15e;-webkit-text-stroke:0.55px #5bc15e">//    drawArc();</div>
<div class="t" style="left:605.2px;top:698.5px;font-family:'Liberation Mono', monospace;font-size:22.07px;color:#5bc15e;-webkit-text-stroke:0.55px #5bc15e">//    drawBezier();</div>
<div class="t" style="left:605.2px;top:726.7px;font-family:'Liberation Mono', monospace;font-size:28.14px;color:#ffffff;-webkit-text-stroke:0.7px #ffffff">}</div>
<div class="t" style="left:605.2px;top:982.3px;font-family:'Liberation Mono', monospace;font-size:28.14px;color:#c83ea6;-webkit-text-stroke:0.7px #c83ea6">void</div>
<div class="t" style="left:672.7px;top:982.3px;font-family:'Liberation Mono', monospace;font-size:28.14px;color:#ffffff;-webkit-text-stroke:0.7px #ffffff"> drawRect()</div>
<div class="t" style="left:605.2px;top:1014.7px;font-family:'Liberation Mono', monospace;font-size:28.14px;color:#ffffff;-webkit-text-stroke:0.7px #ffffff">{</div>
<div class="t" style="left:672.7px;top:1050.2px;font-family:'Liberation Mono', monospace;font-size:22.07px;color:#5bc15e;-webkit-text-stroke:0.55px #5bc15e">//    1<span class="cj" style="width:176px">、获得图形上下文</span></div>
<div class="t" style="left:672.7px;top:1081.7px;font-family:'Liberation Mono', monospace;font-size:28.14px;color:#22aecb;-webkit-text-stroke:0.7px #22aecb">CGContextRef</div>
<div class="t" style="left:875.3px;top:1081.7px;font-family:'Liberation Mono', monospace;font-size:28.14px;color:#ffffff;-webkit-text-stroke:0.7px #ffffff"> context = </div>
<div class="t" style="left:1061.1px;top:1081.7px;font-family:'Liberation Mono', monospace;font-size:28.14px;color:#22aecb;-webkit-text-stroke:0.7px #22aecb">UIGraphicsGetCurrentContext</div>
<div class="t" style="left:1516.9px;top:1081.7px;font-family:'Liberation Mono', monospace;font-size:28.14px;color:#ffffff;-webkit-text-stroke:0.7px #ffffff">();</div>
<div class="t" style="left:672.7px;top:1116.6px;font-family:'Liberation Mono', monospace;font-size:22.07px;color:#5bc15e;-webkit-text-stroke:0.55px #5bc15e">//    2<span class="cj" style="width:132px">、绘制四边形</span>(<span class="cj" style="width:176px">注意：通过系统的</span>AddRect<span class="cj" style="width:396px">方法所绘制出来的矩形的长和宽分别是和</span>X<span class="cj" style="width:44px">轴和</span>Y<span class="cj" style="width:110px">轴平行的，</span></div>
<div class="t" style="left:706.5px;top:1149.8px;font-family:'Liberation Mono', monospace;font-size:22.07px;color:#5bc15e;-webkit-text-stroke:0.55px #5bc15e">//  <span class="cj" style="width:616px">也就是说不能是斜着的的样式，而要使矩形斜着显示，要么旋转</span>View<span class="cj" style="width:352px">，要么上述所述的连接线段的方式）</span></div>
<div class="t" style="left:672.7px;top:1181.7px;font-family:'Liberation Mono', monospace;font-size:28.14px;color:#22aecb;-webkit-text-stroke:0.7px #22aecb">CGContextAddRect</div>
<div class="t" style="left:942.9px;top:1181.7px;font-family:'Liberation Mono', monospace;font-size:28.14px;color:#ffffff;-webkit-text-stroke:0.7px #ffffff">(context, </div>
<div class="t" style="left:1111.7px;top:1181.7px;font-family:'Liberation Mono', monospace;font-size:28.14px;color:#22aecb;-webkit-text-stroke:0.7px #22aecb">CGRectMake</div>
<div class="t" style="left:1280.6px;top:1181.7px;font-family:'Liberation Mono', monospace;font-size:28.14px;color:#ffffff;-webkit-text-stroke:0.7px #ffffff">(</div>
<div class="t" style="left:1297.4px;top:1181.7px;font-family:'Liberation Mono', monospace;font-size:28.14px;color:#8b84d6;-webkit-text-stroke:0.7px #8b84d6">10</div>
<div class="t" style="left:1331.2px;top:1181.7px;font-family:'Liberation Mono', monospace;font-size:28.14px;color:#ffffff;-webkit-text-stroke:0.7px #ffffff">, </div>
<div class="t" style="left:1365.0px;top:1181.7px;font-family:'Liberation Mono', monospace;font-size:28.14px;color:#8b84d6;-webkit-text-stroke:0.7px #8b84d6">10</div>
<div class="t" style="left:1398.7px;top:1181.7px;font-family:'Liberation Mono', monospace;font-size:28.14px;color:#ffffff;-webkit-text-stroke:0.7px #ffffff">, </div>
<div class="t" style="left:1432.5px;top:1181.7px;font-family:'Liberation Mono', monospace;font-size:28.14px;color:#8b84d6;-webkit-text-stroke:0.7px #8b84d6">120</div>
<div class="t" style="left:1483.2px;top:1181.7px;font-family:'Liberation Mono', monospace;font-size:28.14px;color:#ffffff;-webkit-text-stroke:0.7px #ffffff">, </div>
<div class="t" style="left:1516.9px;top:1181.7px;font-family:'Liberation Mono', monospace;font-size:28.14px;color:#8b84d6;-webkit-text-stroke:0.7px #8b84d6">180</div>
<div class="t" style="left:1567.6px;top:1181.7px;font-family:'Liberation Mono', monospace;font-size:28.14px;color:#ffffff;-webkit-text-stroke:0.7px #ffffff">));</div>
<div class="t" style="left:672.7px;top:1216.2px;font-family:'Liberation Mono', monospace;font-size:22.07px;color:#5bc15e;-webkit-text-stroke:0.55px #5bc15e">//    <span class="cj" style="width:88px">设置颜色</span></div>
<div class="t" style="left:605.2px;top:1247.7px;font-family:'Liberation Mono', monospace;font-size:28.14px;color:#ffffff;-webkit-text-stroke:0.7px #ffffff">    [[</div>
<div class="t" style="left:706.5px;top:1247.7px;font-family:'Liberation Mono', monospace;font-size:28.14px;color:#22aecb;-webkit-text-stroke:0.7px #22aecb">UIColor</div>
<div class="t" style="left:841.6px;top:1247.7px;font-family:'Liberation Mono', monospace;font-size:28.14px;color:#22aecb;-webkit-text-stroke:0.7px #22aecb">purpleColor</div>
<div class="t" style="left:1027.3px;top:1247.7px;font-family:'Liberation Mono', monospace;font-size:28.14px;color:#ffffff;-webkit-text-stroke:0.7px #ffffff">] </div>
<div class="t" style="left:1061.1px;top:1247.7px;font-family:'Liberation Mono', monospace;font-size:28.14px;color:#22aecb;-webkit-text-stroke:0.7px #22aecb">setFill</div>
<div class="t" style="left:1179.3px;top:1247.7px;font-family:'Liberation Mono', monospace;font-size:28.14px;color:#ffffff;-webkit-text-stroke:0.7px #ffffff">];</div>
<div class="t" style="left:672.7px;top:1282.6px;font-family:'Liberation Mono', monospace;font-size:22.07px;color:#5bc15e;-webkit-text-stroke:0.55px #5bc15e">//    3<span class="cj" style="width:88px">、显示在</span>View<span class="cj" style="width:22px">上</span></div>
<div class="t" style="left:672.7px;top:1314.8px;font-family:'Liberation Mono', monospace;font-size:28.14px;color:#22aecb;-webkit-text-stroke:0.7px #22aecb">CGContextFillPath</div>
<div class="t" style="left:959.8px;top:1314.8px;font-family:'Liberation Mono', monospace;font-size:28.14px;color:#ffffff;-webkit-text-stroke:0.7px #ffffff">(context);</div>
<div class="t" style="left:1128.6px;top:1316.4px;font-family:'Liberation Mono', monospace;font-size:22.07px;color:#5bc15e;-webkit-text-stroke:0.55px #5bc15e">//<span class="cj" style="width:176px">以实心的方式绘出</span></div>
<div class="t" style="left:605.2px;top:1347.0px;font-family:'Liberation Mono', monospace;font-size:28.14px;color:#ffffff;-webkit-text-stroke:0.7px #ffffff">}</div>
<div style="position:absolute;left:1700px;top:130px;width:94px;height:1406px;background:linear-gradient(90deg, rgba(20,21,26,0) 0%, rgba(20,21,26,0.35) 100%);"></div>
<div style="position:absolute;left:1794px;top:1508px;width:744px;height:28px;background:#1b1c22;"></div>
<div style="position:absolute;left:1700px;top:1508px;width:94px;height:28px;background:linear-gradient(90deg, rgba(27,28,34,0) 0%, rgba(27,28,34,0.9) 100%);"></div>
<div style="position:absolute;left:2498px;top:1508px;width:30px;height:28px;background:linear-gradient(90deg,#9d9d9d,#b9b9b9);"></div>
<div style="position:absolute;left:2528px;top:1508px;width:10px;height:28px;background:#0f0d08;"></div>
<div style="position:absolute;left:1793px;top:140px;width:1px;height:1369px;background:#111318;"></div>
<div style="position:absolute;left:1793px;top:1508px;width:745px;height:1.2px;background:#0b0c10;"></div>
<div style="position:absolute;left:1794px;top:130px;width:760px;height:1378px;background:#fff;border-top-left-radius:7px;overflow:hidden">
<div style="position:absolute;left:0;top:0;width:760px;height:43px;background:linear-gradient(#ebe9eb,#d5d3d6);border-bottom:1px solid #b2b1b3"></div>
<div style="position:absolute;left:0;top:204px;width:760px;height:640px;background:#ffff00"></div>
<div style="position:absolute;left:20px;top:224px;width:240px;height:360px;background:#800080"></div>
</div>
<div style="position:absolute;left:1810px;top:140px;width:22px;height:22px;border-radius:50%;background:#d7d7d7;border:1px solid #c1c1c1"></div>
<div style="position:absolute;left:1850px;top:140px;width:22px;height:22px;border-radius:50%;background:#fdbb37;border:1px solid #e2a231"></div>
<div style="position:absolute;left:1890px;top:140px;width:22px;height:22px;border-radius:50%;background:#d7d7d7;border:1px solid #c1c1c1"></div>
<div class="t" style="left:1932.0px;top:151.9px;font-family:'Liberation Sans', sans-serif;font-size:27.6px;color:#3a3a3a;font-weight:normal;">iPhone 6s - iPhone 6s / iOS 9.3 (13E230)</div>
<div class="t" style="left:1807.5px;top:194.5px;font-family:'Liberation Sans', sans-serif;font-size:24.3px;color:#000000;font-weight:normal;">Carrier</div>
<div class="t" style="left:2123.0px;top:194.1px;font-family:'Liberation Sans', sans-serif;font-size:25.5px;color:#000000;font-weight:bold;">2:46 PM</div>
<svg style="left:1880px;top:180px" width="40" height="30" viewBox="1880 180 40 30">
<path d="M1895.43,190.6 A16.4,16.4 0 0 1 1917.37,190.6" fill="none" stroke="#000" stroke-width="3.1" stroke-linecap="round"/>
<path d="M1899.64,195.3 A10.1,10.1 0 0 1 1913.16,195.3" fill="none" stroke="#000" stroke-width="3.1" stroke-linecap="round"/>
<path d="M1906.4,203 L1902.3,198.4 A6,6 0 0 1 1910.5,198.4 Z" fill="#000"/>
</svg>
<svg style="left:2470px;top:180px" width="68" height="30" viewBox="2470 180 68 30">
<rect x="2484.5" y="186.2" width="43.5" height="17.3" rx="2.6" fill="#fff" stroke="#000" stroke-width="1.2"/>
<rect x="2486.5" y="188.2" width="39.5" height="13.3" rx="1.2" fill="#000"/>
<path d="M2529.2,191.5 Q2532,191.5 2532,194.8 Q2532,198.2 2529.2,198.2 Z" fill="#000"/>
</svg>
</body></html>
